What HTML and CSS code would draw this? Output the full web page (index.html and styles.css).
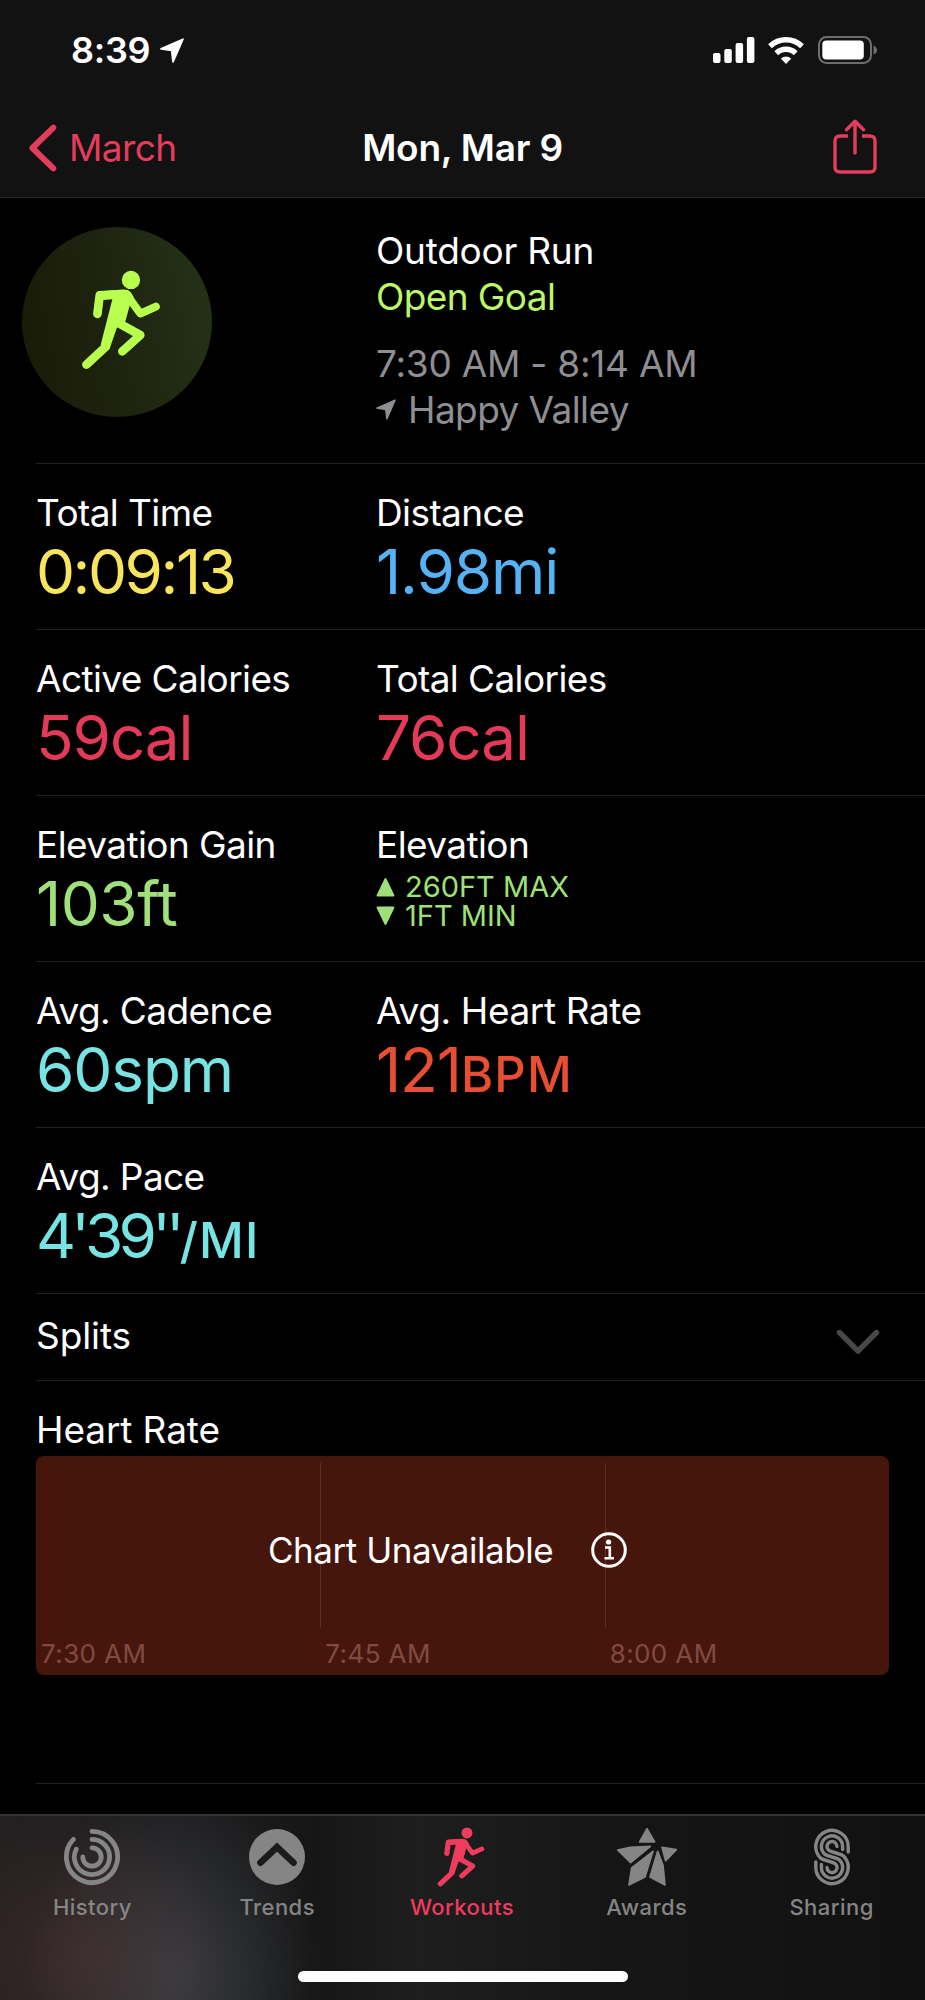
FILE: index.html
```html
<!DOCTYPE html>
<html lang="en">
<head>
  <meta charset="UTF-8">
  <meta name="viewport" content="width=device-width, initial-scale=1.0">
  <title>Workout – Mon, Mar 9</title>
  <link rel="stylesheet" href="styles.css">
</head>
<body>
  <!-- Shared shapes -->
  <svg class="defs" aria-hidden="true">
    <symbol id="runner" viewBox="243 211 240 301">
      <circle cx="393" cy="241" r="27.5" fill="currentColor"/>
      <path d="M296 276 L368 270 Q386 269 394 280 L401 292 L388 322 L376 366 L350 386 L328 450 L302 436 L337 299 L300 302 Z" fill="currentColor"/>
      <g fill="none" stroke="currentColor" stroke-width="26" stroke-linecap="round" stroke-linejoin="round">
        <path d="M292 343 L299 287 L350 284"/>
        <path d="M385 292 L421 342 L468 321" stroke-width="24"/>
        <path d="M259 496 L315 444 L335 380"/>
        <path d="M362 374 L421 407 L367 456"/>
      </g>
    </symbol>
    <symbol id="location" viewBox="0 0 70 72">
      <path d="M67 3 L38 69 L34 36 L3 31 Z" fill="currentColor" stroke="currentColor" stroke-width="5" stroke-linejoin="round"/>
    </symbol>
  </svg>

  <header class="top">
    <div class="status">
      <span class="clock">8:39</span>
      <svg class="clock-arrow"><use href="#location"/></svg>
      <div class="status-icons">
        <svg width="42" height="26" viewBox="0 0 42 26" fill="#fff">
          <rect x="0" y="16" width="7.5" height="10" rx="2"/>
          <rect x="11.3" y="12" width="7.5" height="14" rx="2"/>
          <rect x="22.6" y="6" width="7.5" height="20" rx="2"/>
          <rect x="33.9" y="0" width="7.5" height="26" rx="2"/>
        </svg>
        <svg class="wifi" width="36" height="27" viewBox="0 0 36 27" fill="none" stroke="#fff" stroke-width="5.4">
          <path d="M2 9.3 A23 23 0 0 1 34 9.3"/>
          <path d="M8.3 16.2 A14 14 0 0 1 27.7 16.2"/>
          <path d="M18 27 L12.8 21.6 Q18 17.2 23.2 21.6 Z" fill="#fff" stroke="none"/>
        </svg>
        <svg class="battery" width="60" height="28" viewBox="0 0 60 28">
          <rect x="1" y="1" width="52" height="26" rx="7.5" fill="none" stroke="#6e6e6e" stroke-width="2"/>
          <rect x="4.3" y="4.6" width="41.5" height="18.8" rx="4" fill="#fff"/>
          <path d="M55.5 9.5 Q59 11 59 14 Q59 17 55.5 18.5 Z" fill="#6e6e6e"/>
        </svg>
      </div>
    </div>
    <nav class="nav">
      <a class="back" href="#">
        <svg width="28" height="48" viewBox="0 0 28 48" fill="none" stroke="currentColor" stroke-width="6" stroke-linecap="round" stroke-linejoin="round">
          <path d="M24.3 3.6 L3.4 24 L24.3 44.4"/>
        </svg>
        <span>March</span>
      </a>
      <h1>Mon, Mar 9</h1>
      <a class="share" href="#">
        <svg width="44" height="56" viewBox="0 0 44 56" fill="none" stroke="currentColor" stroke-width="3.4" stroke-linecap="round" stroke-linejoin="round">
          <path d="M15 17 H7 Q2 17 2 22 V48 Q2 53 7 53 H37 Q42 53 42 48 V22 Q42 17 37 17 H29" stroke-linecap="butt"/>
          <path d="M22 34 V2.5 M13.5 10.8 L22 2.3 L30.5 10.8"/>
        </svg>
      </a>
    </nav>
  </header>

  <main>
    <section class="row hero">
      <div class="badge"><svg><use href="#runner"/></svg></div>
      <div class="summary">
        <p class="kind">Outdoor Run</p>
        <p class="goal">Open Goal</p>
        <p class="when">7:30 AM - 8:14 AM</p>
        <p class="where"><svg><use href="#location"/></svg><span>Happy Valley</span></p>
      </div>
    </section>

    <section class="row metrics">
      <div><h2>Total Time</h2><p class="value yellow">0:09:13</p></div>
      <div><h2>Distance</h2><p class="value blue">1.98mi</p></div>
    </section>
    <section class="row metrics">
      <div><h2>Active Calories</h2><p class="value red">59cal</p></div>
      <div><h2>Total Calories</h2><p class="value red">76cal</p></div>
    </section>
    <section class="row metrics">
      <div><h2>Elevation Gain</h2><p class="value green">103ft</p></div>
      <div>
        <h2>Elevation</h2>
        <div class="ranges">
          <p class="range"><svg width="19" height="20" viewBox="0 0 18 19"><path d="M9 2 L16.5 17.5 H1.5 Z"/></svg>260FT MAX</p>
          <p class="range"><svg width="19" height="20" viewBox="0 0 18 19"><path d="M9 17 L1.5 1.5 H16.5 Z"/></svg>1FT MIN</p>
        </div>
      </div>
    </section>
    <section class="row metrics">
      <div><h2>Avg. Cadence</h2><p class="value teal">60spm</p></div>
      <div><h2 class="wide">Avg. Heart Rate</h2><p class="value orange">121<small>BPM</small></p></div>
    </section>
    <section class="row metrics">
      <div><h2>Avg. Pace</h2><p class="value teal pace">4'39''<small>/MI</small></p></div>
    </section>

    <section class="row splits">
      <h2>Splits</h2>
      <svg width="44" height="26" viewBox="0 0 44 26" fill="none" stroke="#48484a" stroke-width="5.4" stroke-linecap="round" stroke-linejoin="round">
        <path d="M3.5 3.5 L22 22 L40.5 3.5"/>
      </svg>
    </section>

    <section class="row heart">
      <h2>Heart Rate</h2>
      <div class="chart">
        <div class="slot"><span>7:30 AM</span></div>
        <div class="slot"><span>7:45 AM</span></div>
        <div class="slot"><span>8:00 AM</span></div>
        <div class="notice">
          <span>Chart Unavailable</span>
          <svg width="36" height="36" viewBox="0 0 36 36" fill="none" stroke="#fff">
            <circle cx="18" cy="18" r="16.3" stroke-width="3"/>
            <circle cx="17.6" cy="10" r="2.6" fill="#fff" stroke="none"/>
            <path d="M14 15.5 H18.8 V26 M13.5 26.2 H23" stroke-width="2.6"/>
          </svg>
        </div>
      </div>
    </section>
  </main>

  <footer class="tabbar">
    <div class="tabs">
      <a class="tab" href="#">
        <svg width="60" height="60" viewBox="-30 -30 60 60" fill="none" stroke="currentColor" stroke-width="4.8" stroke-linecap="round">
          <path d="M0 -25.6 A25.6 25.6 0 1 1 -18.6 -17.6"/>
          <path d="M0 -17.6 A17.6 17.6 0 1 1 -15.8 -7.8"/>
          <path d="M0 -9.2 A9.2 9.2 0 1 1 -9.2 0"/>
        </svg>
        <span>History</span>
      </a>
      <a class="tab" href="#">
        <svg width="60" height="60" viewBox="-30 -30 60 60">
          <circle r="28" fill="currentColor"/>
          <path d="M-16.5 5.7 L0 -10 L16.5 5.7" fill="none" stroke="#1a1b1d" stroke-width="6.6" stroke-linecap="round"/>
        </svg>
        <span>Trends</span>
      </a>
      <a class="tab active" href="#">
        <svg width="60" height="60"><use href="#runner"/></svg>
        <span>Workouts</span>
      </a>
      <a class="tab" href="#">
        <svg width="62" height="60" viewBox="643 85 186 180" fill="currentColor" stroke="currentColor" stroke-width="5" stroke-linejoin="round">
          <path d="M736 90 L714 130 H759 Z"/>
          <path d="M648 154 L686 146 L746 143 L687 192 Z"/>
          <path d="M781 146 L824 153 L792 186 Z"/>
          <path d="M754 158 L690 208 L682 259 L730 235 Z"/>
          <path d="M768 158 L784 200 L790 259 L745 235 Z"/>
        </svg>
        <span>Awards</span>
      </a>
      <a class="tab" href="#">
        <svg width="36" height="60" viewBox="0 -1.5 36 60" fill="none" stroke="currentColor" stroke-width="3.4" stroke-linecap="round">
          <path d="M34.2 23.5 V18 A16.2 16.2 0 1 0 6.5 29.5 C9 32 19 33 21.5 35.5 A5 5 0 1 1 13 39"/>
          <path d="M28.6 21 V18 A10.6 10.6 0 1 0 10.5 25.5 C13 28 23 29 25.5 31.5 A10.6 10.6 0 1 1 7.4 39 V36"/>
          <path d="M23 18 A5 5 0 1 0 14.5 21.5 C17 24 27 25 29.5 27.5 A16.2 16.2 0 1 1 1.8 39 V33.5"/>
        </svg>
        <span>Sharing</span>
      </a>
    </div>
    <div class="home-bar"></div>
  </footer>
</body>
</html>
```
FILE: styles.css
```css
/* Reset */
* {
  box-sizing: border-box;
}
html, body {
  margin: 0;
  padding: 0;
}
body {
  width: 925px;
  height: 2000px;
  overflow: hidden;
  display: flex;
  flex-direction: column;
  background: #000;
  color: #fff;
  font-family: Inter, "Liberation Sans", sans-serif;
  font-size: 37px;
  line-height: 46px;
  letter-spacing: -0.6px;
}
h1, h2, p {
  margin: 0;
  font-size: inherit;
  font-weight: 400;
}
a {
  color: inherit;
  text-decoration: none;
}
svg {
  display: block;
  flex: none;
}
.defs {
  position: absolute;
  width: 0;
  height: 0;
}

/* Status bar and navigation */
.top {
  height: 198px;
  flex: none;
  background: #121212;
  border-bottom: 1px solid #262626;
}
.status {
  height: 100px;
  display: flex;
  align-items: center;
  padding: 0 47px 0 71px;
}
.clock {
  font-size: 36px;
  font-weight: 600;
  letter-spacing: -0.3px;
}
.clock-arrow {
  width: 24px;
  height: 25px;
  margin-left: 10px;
}
.status-icons {
  display: flex;
  align-items: center;
  margin-left: auto;
}
.wifi {
  margin-left: 13px;
}
.battery {
  margin-left: 14px;
}
.nav {
  height: 97px;
  display: grid;
  grid-template-columns: 1fr auto 1fr;
  align-items: center;
  padding: 0 48px 2px 28px;
}
.back {
  display: flex;
  align-items: center;
  gap: 12px;
  color: #e43c5c;
}
.back svg {
  margin-left: 1px;
}
.nav h1 {
  font-weight: 600;
  letter-spacing: -0.2px;
  padding-left: 20px;
}
.share {
  justify-self: end;
  margin-bottom: 2px;
  color: #e43c5c;
}

/* Content rows */
.row {
  margin-left: 36px;
  border-bottom: 1px solid #222;
}
.hero {
  height: 266px;
  display: flex;
}
.badge {
  width: 190px;
  height: 190px;
  margin: 29px 151px 0 -14px;
  border-radius: 50%;
  display: flex;
  align-items: center;
  justify-content: center;
  background: linear-gradient(80deg, #191a06, #1e2410 50%, #253318);
  color: #b9ff4e;
}
.badge svg {
  width: 80px;
  height: 100px;
  margin: 0 0 4px 7px;
}
.summary {
  padding: 30px 0 0 13px;
}
.kind {
  letter-spacing: -0.25px;
}
.goal {
  color: #bdf667;
  line-height: 45px;
}
.when {
  margin-top: 22px;
  letter-spacing: -0.25px;
}
.when, .where {
  color: #8e8e93;
}
.where {
  display: flex;
  align-items: center;
  line-height: 45px;
}
.where svg {
  width: 20px;
  height: 21px;
  margin-right: 12px;
}
.metrics {
  height: 166px;
  padding-top: 26px;
  display: grid;
  grid-template-columns: 340px 1fr;
}
.wide {
  letter-spacing: -0.4px;
}
.value {
  font-size: 62px;
  line-height: 72px;
  letter-spacing: -1.1px;
}
.value small {
  font-size: 49px;
  font-weight: 500;
  letter-spacing: 1.2px;
}
.yellow {
  color: #f9e55b;
  letter-spacing: -2.5px;
}
.blue { color: #55b2f5; }
.red { color: #e43a5a; }
.green {
  color: #9fe07b;
  letter-spacing: -0.5px;
}
.teal { color: #77e3e2; }
.orange { color: #e84e31; }
.pace {
  letter-spacing: -4.8px;
}
.ranges {
  padding-top: 4px;
}
.range {
  display: flex;
  align-items: center;
  gap: 10px;
  font-size: 29px;
  line-height: 29px;
  letter-spacing: 0;
  color: #9fe07b;
}
.range svg {
  fill: currentColor;
  stroke: currentColor;
  stroke-width: 2;
  stroke-linejoin: round;
}
.splits {
  height: 87px;
  display: flex;
  align-items: center;
  justify-content: space-between;
  padding: 0 45px 2px 0;
  letter-spacing: -0.1px;
}
.splits svg {
  margin-top: 12px;
}

/* Heart rate chart */
.heart {
  height: 403px;
  padding: 26px 36px 0 0;
}
.heart h2 {
  letter-spacing: -0.1px;
}
.chart {
  position: relative;
  height: 219px;
  margin-top: 3px;
  border-radius: 8px;
  background: #46160d;
  display: grid;
  grid-template-columns: repeat(3, 1fr);
  padding-top: 7px;
}
.slot {
  display: flex;
  align-items: flex-end;
  padding: 0 0 6px 5px;
  font-size: 26px;
  line-height: 30px;
  letter-spacing: 0.4px;
  color: #814b43;
  background: linear-gradient(#5e3029, #5e3029) no-repeat left top / 1px 165px;
}
.slot:first-child {
  background: none;
}
/* message laid over the grid lines */
.notice {
  position: absolute;
  inset: 0 0 31px 232px;
  display: flex;
  align-items: center;
  gap: 38px;
  font-size: 35px;
  letter-spacing: -0.45px;
}

/* Tab bar */
.tabbar {
  height: 186px;
  margin-top: auto;
  flex: none;
  border-top: 2px solid #343434;
  background:
    radial-gradient(ellipse 150px 150px at 80px 140px, rgba(90, 54, 52, 0.42), transparent),
    radial-gradient(ellipse 150px 190px at 175px 160px, rgba(84, 90, 98, 0.5), transparent),
    linear-gradient(90deg, #222020, #1d1d1f 20%, #161616 34%, #1e1e1e 45%, #161616 65%, #111);
}
.tabs {
  display: grid;
  grid-template-columns: repeat(5, 184.8px);
  padding-top: 11px;
}
.tab {
  display: flex;
  flex-direction: column;
  align-items: center;
  color: #858585;
  font-size: 22px;
  font-weight: 500;
  line-height: 28px;
  letter-spacing: 0.45px;
}
.tab span {
  margin-top: 6px;
}
.active {
  color: #ee3c5e;
}
.active svg {
  margin-right: 2px;
}
.home-bar {
  width: 330px;
  height: 11px;
  margin: 50px auto 0;
  border-radius: 6px;
  background: #fff;
}
```
